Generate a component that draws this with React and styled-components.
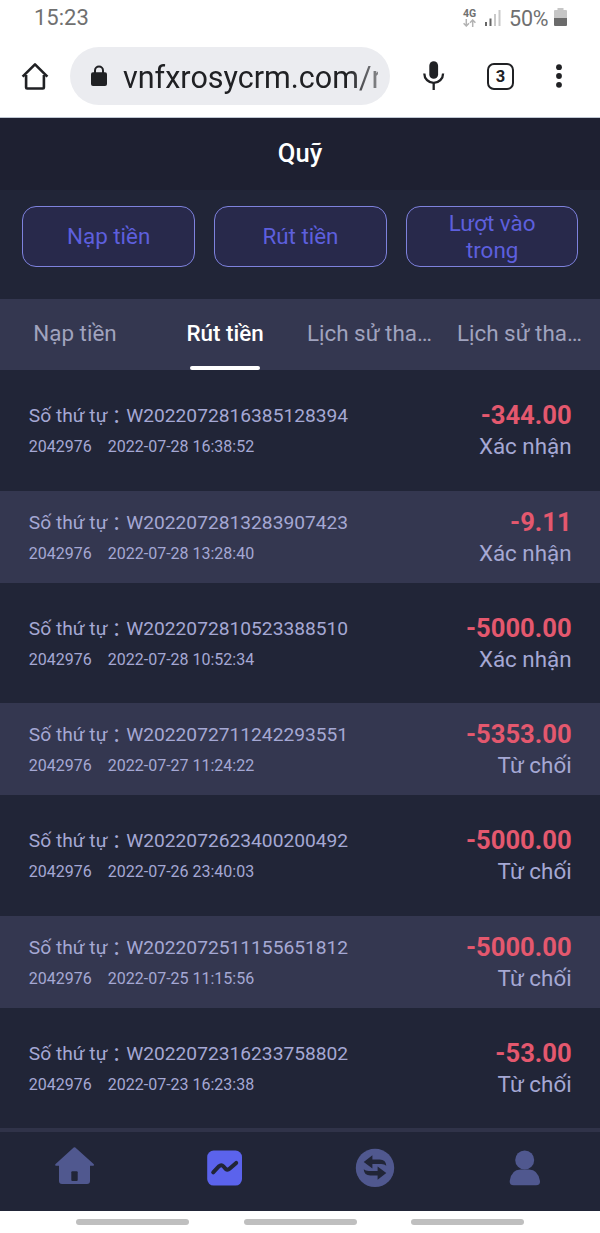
import React from 'react';
import styled, { createGlobalStyle } from 'styled-components';

const GlobalStyle = createGlobalStyle`
  * {
    box-sizing: border-box;
  }

  body {
    margin: 0;
    background-color: #fff;
    font-family: Roboto, 'Noto Sans CJK TC', sans-serif;
  }
`;

const Screen = styled.div`
  width: 600px;
  height: 1233px;
  display: flex;
  flex-direction: column;
  overflow: hidden;
  background-color: #212537;
`;

const StatusBar = styled.div`
  flex: none;
  height: 36px;
  padding: 0 33px 0 34px;
  display: flex;
  justify-content: space-between;
  align-items: center;
  background-color: #fff;
  color: #707070;
  font-size: 22px;
`;

const Clock = styled.span`
  line-height: 36px;
`;

const StatusIcons = styled.div`
  display: flex;
  align-items: center;

  > svg {
    margin-bottom: 2px;
  }
`;

const Network = styled.div`
  width: 15px;
  margin-right: 8px;
  display: flex;
  flex-direction: column;
  align-items: center;
  font-size: 10.5px;
  font-weight: 700;
  line-height: 10px;
`;

const Percent = styled.span`
  width: 40px;
  margin: 0 5px 0 8px;
  font-size: 21.5px;
  letter-spacing: -0.2px;
`;

const BrowserBar = styled.div`
  flex: none;
  height: 82px;
  padding-bottom: 1px;
  display: flex;
  align-items: center;
  background-color: #fff;
  border-bottom: 1px solid #bfc7d3;

  > svg {
    flex: none;
  }
`;

const AddressBar = styled.div`
  width: 320px;
  height: 58px;
  margin: 0 31px 0 20px;
  padding: 0 12px 0 20px;
  display: flex;
  align-items: center;
  border-radius: 29px;
  background-color: #ebecf0;
`;

const Url = styled.span`
  flex: 1;
  margin-left: 15px;
  padding-top: 3px;
  overflow: hidden;
  white-space: nowrap;
  color: #202124;
  font-size: 30.5px;
  line-height: 40px;
  mask-image: linear-gradient(to right, #000 88%, rgba(0, 0, 0, 0.5));
`;

const TabCount = styled.div`
  width: 27px;
  height: 27px;
  margin: 0 42px;
  border: 2.5px solid #202124;
  border-radius: 7px;
  color: #202124;
  font-size: 16.5px;
  font-weight: 700;
  line-height: 23px;
  text-align: center;
`;

const Title = styled.h1`
  flex: none;
  height: 72px;
  margin: 0;
  background-color: #1e2031;
  color: #fff;
  font-size: 25.6px;
  font-weight: 500;
  line-height: 70px;
  text-align: center;
`;

const Actions = styled.div`
  flex: none;
  height: 109px;
  padding: 16px 21.6px 0 22.4px;
  display: flex;
  gap: 19.2px;
`;

const ActionButton = styled.button`
  flex: 1;
  height: 61px;
  padding: 0 30px;
  border: 1.4px solid #7e82dd;
  border-radius: 14px;
  background-color: #28294b;
  color: #5d5fdd;
  font-family: inherit;
  font-size: 22.4px;
  line-height: 26.5px;
`;

const Tabs = styled.div`
  flex: none;
  height: 71px;
  display: flex;
  background-color: #343750;
`;

const Tab = styled.div`
  width: 150px;
  display: flex;
  flex-direction: column;
  align-items: center;
  color: ${({ $active }) => ($active ? '#fff' : '#a0a3be')};
  font-size: 22.4px;
  font-weight: ${({ $active }) => ($active ? 500 : 400)};
  line-height: 69px;
  white-space: nowrap;

  &::after {
    content: '';
    width: 70px;
    height: 4px;
    margin-top: -2px;
    border-radius: 2px;
    background-color: ${({ $active }) => ($active ? '#fff' : 'transparent')};
  }
`;

const TabLabel = styled.span`
  width: 136px;
  text-align: ${({ $clipped }) => ($clipped ? 'left' : 'center')};
`;

const List = styled.div`
  flex: 1;
  padding-top: 14.2px;
  overflow: hidden;
`;

const Row = styled.div`
  height: 92.1px;
  margin-bottom: 14.23px;
  padding: 15px 28.4px 0 28.8px;
  display: flex;
  justify-content: space-between;
  color: #a5a8d4;

  &:nth-child(even) {
    background-color: #343750;
  }
`;

const OrderNumber = styled.div`
  font-size: 19.2px;
  line-height: 33px;
`;

const Colon = styled.span`
  margin-left: -0.5px;
  line-height: 0;
  vertical-align: -2px;
`;

const Meta = styled.div`
  display: flex;
  gap: 16px;
  font-size: 16px;
  line-height: 29px;
`;

const Result = styled.div`
  text-align: right;
`;

const Amount = styled.div`
  color: #e4586e;
  font-size: 25.6px;
  font-weight: 700;
  line-height: 33px;
`;

const Status = styled.div`
  font-size: 22.4px;
  line-height: 29px;
`;

const BottomNav = styled.nav`
  flex: none;
  height: 83px;
  display: flex;
  border-top: 4px solid #303349;
`;

const NavItem = styled.a`
  width: 150px;
  padding-top: 13px;
  display: flex;
  justify-content: center;
`;

const GestureBar = styled.div`
  flex: none;
  height: 22px;
  padding: 8px 76px 0;
  display: flex;
  justify-content: space-between;
  background-color: #fff;
`;

const Gesture = styled.span`
  width: 113px;
  height: 5.5px;
  border-radius: 3px;
  background-color: #bfbfbf;
`;

const orders = [
  { number: 'W2022072816385128394', time: '2022-07-28 16:38:52', amount: '-344.00', status: 'Xác nhận' },
  { number: 'W2022072813283907423', time: '2022-07-28 13:28:40', amount: '-9.11', status: 'Xác nhận' },
  { number: 'W2022072810523388510', time: '2022-07-28 10:52:34', amount: '-5000.00', status: 'Xác nhận' },
  { number: 'W2022072711242293551', time: '2022-07-27 11:24:22', amount: '-5353.00', status: 'Từ chối' },
  { number: 'W2022072623400200492', time: '2022-07-26 23:40:03', amount: '-5000.00', status: 'Từ chối' },
  { number: 'W2022072511155651812', time: '2022-07-25 11:15:56', amount: '-5000.00', status: 'Từ chối' },
  { number: 'W2022072316233758802', time: '2022-07-23 16:23:38', amount: '-53.00', status: 'Từ chối' },
];

const tabs = ['Nạp tiền', 'Rút tiền', 'Lịch sử tha…', 'Lịch sử tha…'];

const PhoneStatus = () => (
  <StatusBar>
    <Clock>15:23</Clock>
    <StatusIcons>
      <Network>
        4G
        <svg width="13" height="8" viewBox="0 0 13 8" fill="none" stroke="#b3b3b3" strokeWidth="1.5">
          <path d="M3.3 0v7M.6 4.2l2.7 2.8L6 4.2M9.7 8V1M7 3.8L9.7 1l2.7 2.8" />
        </svg>
      </Network>
      <svg width="16" height="17" viewBox="0 0 16 17">
        <path d="M0 13h2v4H0zM4.500 9.500h2V17h-2z" fill="#666" />
        <path d="M9 5h2v12H9zM13.500 1h2v16h-2z" fill="#c9c9c9" />
      </svg>
      <Percent>50%</Percent>
      <svg width="13" height="18" viewBox="0 0 13 18">
        <path d="M3.500 0h6v2H12a1 1 0 0 1 1 1v7H0V3a1 1 0 0 1 1-1h2.500z" fill="#c6c6c6" />
        <path d="M0 10h13v7a1 1 0 0 1-1 1H1a1 1 0 0 1-1-1z" fill="#6b6b6b" />
      </svg>
    </StatusIcons>
  </StatusBar>
);

const Browser = () => (
  <BrowserBar>
    <svg width="50" height="30" viewBox="0 0 50 30" fill="none" stroke="#202124" strokeWidth="2.6" strokeLinejoin="round">
      <path d="M22.600 15.700L35 3.400l12.400 12.300M26.100 14v12.500a1 1 0 0 0 1 1h15.800a1 1 0 0 0 1-1V14" />
    </svg>
    <AddressBar>
      <svg width="18" height="22" viewBox="0 0 18 22">
        <path d="M5 8V5.500a4 4 0 0 1 8 0V8" fill="none" stroke="#202124" strokeWidth="2" />
        <rect x="1" y="7.200" width="16" height="13.800" rx="2" fill="#202124" />
      </svg>
      <Url>vnfxrosycrm.com/r</Url>
    </AddressBar>
    <svg width="24" height="32" viewBox="0 0 24 32">
      <rect x="8.300" y="1.300" width="8.800" height="17.500" rx="4.400" fill="#202124" />
      <path d="M3.300 13.500a9.400 9.400 0 0 0 18.800 0M12.700 23v7" fill="none" stroke="#202124" strokeWidth="2.300" />
    </svg>
    <TabCount>3</TabCount>
    <svg width="6" height="26" viewBox="0 0 6 26" fill="#202124">
      <circle cx="3" cy="4.200" r="2.900" />
      <circle cx="3" cy="13" r="2.900" />
      <circle cx="3" cy="21.800" r="2.900" />
    </svg>
  </BrowserBar>
);

const Navigation = () => (
  <BottomNav>
    <NavItem>
      <svg width="40" height="44" viewBox="0 0 40 44">
        <path
          d="M18.700 2.600Q19.500 1.900 20.300 2.600L38.600 19Q39.600 20.400 38.200 20.700H35V36Q35 39 32 39H7Q4 39 4 36V20.700H1Q-.5 20.400.6 19z"
          fill="#50588f"
        />
        <rect x="16.300" y="26.300" width="6.400" height="9.800" rx="1" fill="#212537" />
      </svg>
    </NavItem>
    <NavItem>
      <svg width="40" height="44" viewBox="0 0 40 44">
        <rect x="2.200" y="5.600" width="34.800" height="35" rx="6.500" fill="#5b63ec" />
        <path
          d="M8.200 27.300l5.800-6.100q2.400-2.100 4.300.1l2.300 2.600q2 1.600 3.900-.1l6.700-5.900"
          fill="none"
          stroke="#212537"
          strokeWidth="4"
          strokeLinecap="round"
        />
      </svg>
    </NavItem>
    <NavItem>
      <svg width="40" height="44" viewBox="0 0 40 44">
        <circle cx="20" cy="22.900" r="19.200" fill="#50588f" />
        <path d="M8.700 17l8.700-6.800v4.300h7.300q6.100 0 6.600 6.200-1.800-1.700-5-1.700h-8.900v4.500z" fill="#212537" />
        <path d="M31.300 28l-8.700 6.800v-4.300h-7.300q-6.100 0-6.600-6.200 1.800 1.700 5 1.700h8.900v-4.500z" fill="#212537" />
      </svg>
    </NavItem>
    <NavItem>
      <svg width="40" height="44" viewBox="0 0 40 44" fill="#50588f">
        <circle cx="19.700" cy="15" r="9.500" />
        <path d="M15.500 24.500h8.500q9 0 11 11.500.4 4.200-4 4.200H8.700q-4.400 0-4-4.200 1.600-11.500 10.800-11.500z" />
      </svg>
    </NavItem>
  </BottomNav>
);

const App = () => {
  return (
    <Screen>
      <GlobalStyle />
      <PhoneStatus />
      <Browser />
      <Title>Quỹ</Title>
      <Actions>
        <ActionButton>Nạp tiền</ActionButton>
        <ActionButton>Rút tiền</ActionButton>
        <ActionButton>Lượt vào trong</ActionButton>
      </Actions>
      <Tabs>
        {tabs.map((tab, index) => (
          <Tab key={index} $active={index === 1}>
            <TabLabel $clipped={tab.endsWith('…')}>{tab}</TabLabel>
          </Tab>
        ))}
      </Tabs>
      <List>
        {orders.map((order) => (
          <Row key={order.number}>
            <div>
              <OrderNumber>
                Số thứ tự<Colon>：</Colon>
                {order.number}
              </OrderNumber>
              <Meta>
                <span>2042976</span>
                <span>{order.time}</span>
              </Meta>
            </div>
            <Result>
              <Amount>{order.amount}</Amount>
              <Status>{order.status}</Status>
            </Result>
          </Row>
        ))}
      </List>
      <Navigation />
      <GestureBar>
        <Gesture />
        <Gesture />
        <Gesture />
      </GestureBar>
    </Screen>
  );
};

export default App;
